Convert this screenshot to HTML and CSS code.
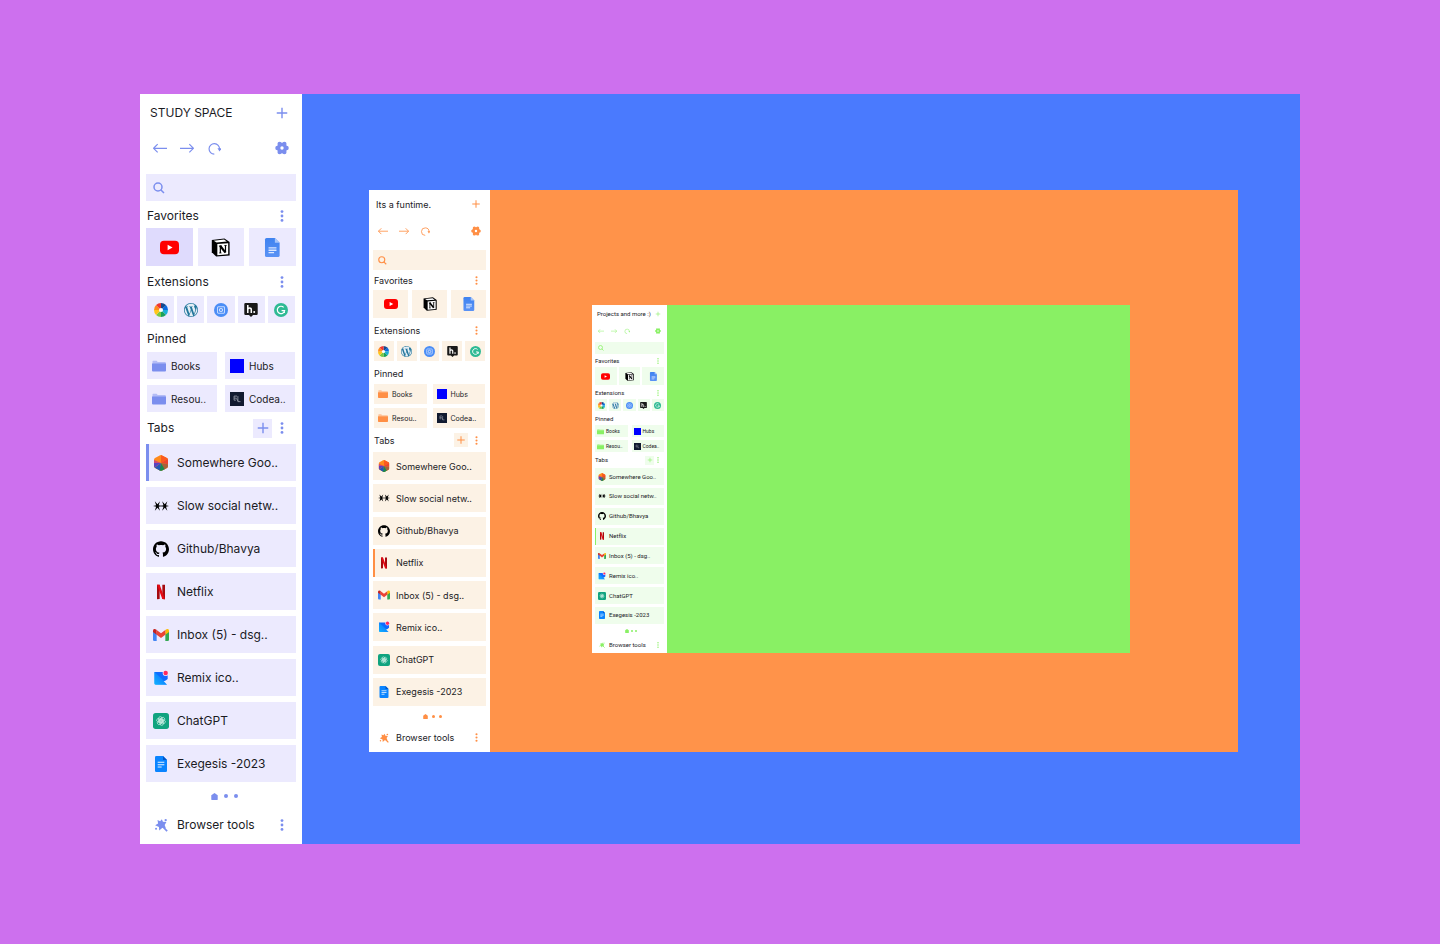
FILE: index.html
```html
<!DOCTYPE html>
<html lang="en">
<head>
<meta charset="utf-8">
<meta name="viewport" content="width=device-width, initial-scale=1">
<title>Spaces</title>
<link rel="stylesheet" href="styles.css">
</head>
<body>
<svg class="sprite" aria-hidden="true">
  <defs>
    <linearGradient id="g-doc" x1="0" y1="0" x2="0" y2="1"><stop offset="0" stop-color="#3f83f0"/><stop offset="1" stop-color="#5a92f5"/></linearGradient>
    <linearGradient id="g-remix" x1="0" y1="1" x2="1" y2="0"><stop offset="0" stop-color="#0fb4ff"/><stop offset=".55" stop-color="#0a6cff"/><stop offset="1" stop-color="#2a5cff"/></linearGradient>
    <clipPath id="c-hex"><path d="M12 0q1 0 2 .6l7 4q1.500 1 1.500 2.600v9.600q0 1.600-1.500 2.600L14 23.400q-2 1.200-4 0l-7-4Q1.500 18.400 1.500 16.800V7.200q0-1.600 1.500-2.600L10 .6Q11 0 12 0z"/></clipPath>
    <clipPath id="c-wheel"><circle cx="12" cy="12" r="12"/></clipPath>
  </defs>
  <symbol id="plus" viewBox="0 0 24 24"><path d="M12 3v18M3 12h18" fill="none" stroke="currentColor" stroke-width="2.400"/></symbol>
  <symbol id="back" viewBox="0 0 24 24"><path d="M24 12.500H1M8 5.500l-7 7 7 7" fill="none" stroke="currentColor" stroke-width="2"/></symbol>
  <symbol id="forward" viewBox="0 0 24 24"><path d="M0 12.500h23M16 5.500l7 7-7 7" fill="none" stroke="currentColor" stroke-width="2"/></symbol>
  <symbol id="reload" viewBox="0 0 24 24"><path d="M12.500 22.500A9 9 0 1 1 21.500 14" fill="none" stroke="currentColor" stroke-width="2"/><path d="M18 12.500h7L21.500 18z" fill="currentColor"/></symbol>
  <symbol id="gear" viewBox="0 0 24 24"><g fill="currentColor"><circle cx="12" cy="12" r="8.800"/><circle cx="8" cy="5" r="3.800"/><circle cx="16" cy="5" r="3.800"/><circle cx="19.800" cy="12" r="3.800"/><circle cx="16" cy="19" r="3.800"/><circle cx="8" cy="19" r="3.800"/><circle cx="4.200" cy="12" r="3.800"/></g><circle cx="12" cy="12" r="2.900" fill="#fff"/></symbol>
  <symbol id="search" viewBox="0 0 24 24"><g fill="none" stroke="currentColor" stroke-width="3"><circle cx="10" cy="10" r="8"/><path d="M15.500 15.500l6.500 6.500"/></g></symbol>
  <symbol id="more" viewBox="0 0 24 24"><g fill="currentColor"><circle cx="12" cy="3.200" r="2.800"/><circle cx="12" cy="12" r="2.800"/><circle cx="12" cy="20.800" r="2.800"/></g></symbol>
  <symbol id="home" viewBox="0 0 24 24"><path d="M12 0l11 8v13q0 3-3 3H4q-3 0-3-3V8z" fill="currentColor"/></symbol>
  <symbol id="folder" viewBox="0 0 28 24"><path d="M1 3q0-1.500 1.500-1.500H9l2.500 2.500H26q1.500 0 1.500 1.500V8H1z" fill="currentColor" opacity=".5"/><path d="M0 7h28v14q0 2-2 2H2q-2 0-2-2z" fill="currentColor"/></symbol>
  <symbol id="wand" viewBox="0 0 24 24"><g fill="currentColor"><path d="M13.500 2l1.800 4.500 6 .5-3 5 2.200 6-6-1.500-5.500 5-.5-6L2 12.500l5-3L6 3.500l4.500 2z"/><circle cx="20" cy="3.500" r="2"/><circle cx="3.500" cy="18.500" r="1.700"/></g><path d="M15 15l7.500 7.500" stroke="currentColor" stroke-width="3"/></symbol>

  <symbol id="youtube" viewBox="0 0 24 24"><rect x="0" y="3.500" width="24" height="17" rx="5" fill="#f00"/><path d="M9.600 8.400v7.200l6.300-3.600z" fill="#fff"/></symbol>
  <symbol id="notion" viewBox="0 0 24 24"><path d="M1 2.500L17 .5 23.500 5v17L6.500 23.500 1 18z" fill="#000"/><path d="M3.500 3.500L16.500 2l3.500 2.500L7 5.700z" fill="#fff"/><path d="M8 7.600l13.700-1v13.800L8 21.700z" fill="#fff"/><path d="M11.800 10v8.800M18.300 9.300v8.800" fill="none" stroke="#000" stroke-width="1.500"/><path d="M11.500 9.800l6.800 8.700" fill="none" stroke="#000" stroke-width="2.800"/><path d="M10 10h3.400M16.800 9.400h3M10.300 18.900h3" stroke="#000" stroke-width="1"/></symbol>
  <symbol id="docs" viewBox="0 0 24 24"><path d="M4.500 0H15l6 6v16q0 2-2 2H4.500q-2 0-2-2V2q0-2 2-2z" fill="url(#g-doc)"/><path d="M15 0l6 6h-6z" fill="#a6c5fa"/><path d="M7 12.500h10M7 15.500h10M7 18.500h7" stroke="#dce8ff" stroke-width="1.700"/></symbol>

  <symbol id="wheel" viewBox="0 0 24 24"><g clip-path="url(#c-wheel)"><path d="M12 12V0h12v1z" fill="#15478c"/><path d="M12 12L24 0v12z" fill="#0a6ae0"/><path d="M12 12h12v12z" fill="#18b0d8"/><path d="M12 12l12 12H12z" fill="#18a05c"/><path d="M12 12v12H0z" fill="#7ac943"/><path d="M12 12L0 24V12z" fill="#ffc61a"/><path d="M12 12H0V0z" fill="#ff8a1c"/><path d="M12 12L0 0h12z" fill="#f0352f"/></g><circle cx="12" cy="12" r="3.500" fill="#fff"/></symbol>
  <symbol id="wordpress" viewBox="0 0 24 24"><circle cx="12" cy="12" r="11.500" fill="#e4eef5"/><path fill="#21759b" d="M21.469 6.825c.84 1.537 1.318 3.300 1.318 5.175 0 3.979-2.156 7.456-5.363 9.325l3.295-9.527c.615-1.540.82-2.771.82-3.864 0-.405-.026-.78-.07-1.110m-7.981.105c.647-.03 1.232-.105 1.232-.105.582-.075.514-.93-.067-.899 0 0-1.755.135-2.880.135-1.064 0-2.850-.15-2.850-.15-.585-.03-.661.855-.075.885 0 0 .54.061 1.125.09l1.680 4.605-2.370 7.080L5.354 6.900c.649-.03 1.234-.1 1.234-.1.585-.075.516-.93-.065-.896 0 0-1.746.138-2.874.138-.2 0-.438-.008-.69-.015C4.911 3.150 8.235 1.215 12 1.215c2.809 0 5.365 1.072 7.286 2.833-.046-.003-.091-.009-.141-.009-1.060 0-1.812.923-1.812 1.914 0 .89.513 1.643 1.060 2.531.411.72.89 1.643.89 2.977 0 .915-.354 1.994-.821 3.479l-1.075 3.585-3.900-11.610zM12 22.784c-1.059 0-2.081-.153-3.048-.437l3.237-9.406 3.315 9.087c.024.053.05.101.078.149-1.120.393-2.325.609-3.582.609M1.211 12c0-1.564.336-3.050.935-4.390L7.290 21.709C3.694 19.960 1.212 16.271 1.211 12M12 0C5.385 0 0 5.385 0 12s5.385 12 12 12 12-5.385 12-12S18.615 0 12 0"/></symbol>
  <symbol id="camera" viewBox="0 0 24 24"><circle cx="12" cy="12" r="12" fill="#4a8df6"/><rect x="6" y="6.500" width="12" height="11" rx="1.500" fill="none" stroke="#c3d9ff" stroke-width="1.800"/><circle cx="12" cy="12" r="2.700" fill="none" stroke="#d7e6ff" stroke-width="1.800"/></symbol>
  <symbol id="hypothesis" viewBox="0 0 24 24"><path d="M2.500 0h19q2 0 2 2v16.500q0 2-2 2h-6L12 24l-3.500-3.500h-6q-2 0-2-2V2q0-2 2-2z" fill="#191919"/><path d="M6.500 3.500V17M6.500 11.500q0-3 3-3t3 3V17" fill="none" stroke="#fff" stroke-width="2.600"/><circle cx="17.500" cy="15.500" r="1.700" fill="#fff"/></symbol>
  <symbol id="grammarly" viewBox="0 0 24 24"><circle cx="12" cy="12" r="12" fill="#2fba94"/><path d="M16.500 7.500a6.300 6.300 0 1 0 1.700 5.500H13M17.800 13v4" fill="none" stroke="#fff" stroke-width="2"/></symbol>

  <symbol id="bluebox" viewBox="0 0 24 24"><path d="M0 0h24v24H0z" fill="#00f"/></symbol>
  <symbol id="codea" viewBox="0 0 24 24"><path d="M0 0h24v24H0z" fill="#111a30"/><path d="M7 7h5M7 7v7M7 10.500h4M7 14h3M13.500 7v9.500H18M11 11l3 5" fill="none" stroke="#9a9fac" stroke-width="1.400"/></symbol>

  <symbol id="hex" viewBox="0 0 24 24"><g clip-path="url(#c-hex)"><path d="M0 0h24v24H0z" fill="#ff8a1c"/><path d="M12 0l12 5-12 7z" fill="#fb5a20"/><path d="M24 5v9l-12-2z" fill="#ea4530"/><path d="M12 12l12 2v5l-7 4z" fill="#a8623a"/><path d="M12 12l7 12H9z" fill="#188a50"/><path d="M12 12l-2 12-8-5z" fill="#2456b8"/><path d="M12 12L0 20v-9z" fill="#5a40c0"/><path d="M12 12L0 12V7z" fill="#d04a70"/></g></symbol>
  <symbol id="stars" viewBox="0 0 24 24"><g fill="#000"><path id="star" d="M-.5 12l5.200-1.200L2.700 5l4 4.200L10.500 5l-2 5.800L14 12l-5.500 1.200 2 5.800-3.800-4.200-4 4.200 2-5.800z"/><path d="M10.500 12l5.200-1.200-2-5.800 4 4.200L21.500 5l-2 5.800L24.500 12l-5 1.200 2 5.800-3.800-4.200-4 4.200 2-5.800z"/></g></symbol>
  <symbol id="github" viewBox="0 0 24 24"><path d="M12 .297c-6.630 0-12 5.373-12 12 0 5.303 3.438 9.800 8.205 11.385.6.113.82-.258.82-.577 0-.285-.01-1.040-.015-2.040-3.338.724-4.042-1.610-4.042-1.610C4.422 18.070 3.633 17.700 3.633 17.700c-1.087-.744.084-.729.084-.729 1.205.084 1.838 1.236 1.838 1.236 1.070 1.835 2.809 1.305 3.495.998.108-.776.417-1.305.76-1.605-2.665-.3-5.466-1.332-5.466-5.930 0-1.310.465-2.380 1.235-3.220-.135-.303-.54-1.523.105-3.176 0 0 1.005-.322 3.300 1.230.96-.267 1.980-.399 3-.405 1.020.006 2.040.138 3 .405 2.280-1.552 3.285-1.230 3.285-1.230.645 1.653.24 2.873.12 3.176.765.84 1.230 1.910 1.230 3.220 0 4.610-2.805 5.625-5.475 5.920.42.36.81 1.096.81 2.220 0 1.606-.015 2.896-.015 3.286 0 .315.21.69.825.57C20.565 22.092 24 17.592 24 12.297c0-6.627-5.373-12-12-12"/></symbol>
  <symbol id="netflix" viewBox="0 0 24 24"><path d="M6 1h4v21.500L6 23zM14 1h4v22l-4-.5z" fill="#a5090f"/><path d="M6 1h4l8 22-4-.5z" fill="#e50914"/></symbol>
  <symbol id="gmail" viewBox="0 0 24 24"><path d="M0 6v13q0 2 2 2h3.500V9.800z" fill="#4285f4"/><path d="M24 6v13q0 2-2 2h-3.500V9.800z" fill="#34a853"/><path d="M0 5.500q0-2 2-2.500 1.400-.2 2.500.6L5.500 4.400v7.200L0 7.500z" fill="#c5221f"/><path d="M24 5.500q0-2-2-2.500-1.400-.2-2.500.6l-1 .8v7.200L24 7.500z" fill="#fbbc04"/><path d="M5.500 4.400L12 9.300l6.500-4.900v7.200L12 16.500l-6.500-4.900z" fill="#ea4335"/></symbol>
  <symbol id="remix" viewBox="0 0 24 24"><path d="M2 3h17q3 0 3 3v7.500q-3 3-6 3.500l5 5H4q-2 0-2-2z" fill="url(#g-remix)"/><path d="M2 3l13 12 6 7H4q-2 0-2-2z" fill="#17b0ff" opacity=".4"/><circle cx="19" cy="4.500" r="4.500" fill="#eceafe"/><circle cx="19" cy="4.500" r="3.300" fill="#ff2b5e"/></symbol>
  <symbol id="chatgpt" viewBox="0 0 24 24"><rect width="24" height="24" rx="4" fill="#10a37f"/><g fill="none" stroke="#c9ede3" stroke-width="1.100"><rect x="8.500" y="5.500" width="5" height="9" rx="2.500"/><rect x="8.500" y="5.500" width="5" height="9" rx="2.500" transform="rotate(60 12 12)"/><rect x="8.500" y="5.500" width="5" height="9" rx="2.500" transform="rotate(120 12 12)"/><rect x="8.500" y="5.500" width="5" height="9" rx="2.500" transform="rotate(180 12 12)"/><rect x="8.500" y="5.500" width="5" height="9" rx="2.500" transform="rotate(240 12 12)"/><rect x="8.500" y="5.500" width="5" height="9" rx="2.500" transform="rotate(300 12 12)"/></g></symbol>
  <symbol id="file" viewBox="0 0 24 24"><path d="M5 0h10l6 6v16q0 2-2 2H5q-2 0-2-2V2q0-2 2-2z" fill="#0a84ff"/><path d="M15 0l6 6h-6z" fill="#0057c8"/><path d="M7 9.500h10M7 13h10M7 16.500h6" stroke="#e6f2ff" stroke-width="1.600"/></symbol>
</svg>

<main class="desk"></main>
<script src="app.js"></script>
</body>
</html>
```

FILE: styles.css
```css
* { box-sizing: border-box; }

body {
  margin: 0;
  background: #cd70ee;
  color: #1b1b1f;
  font-family: Inter, "Liberation Sans", sans-serif;
}

button, input {
  margin: 0;
  padding: 0;
  border: 0;
  border-radius: 0;
  background: none;
  color: inherit;
  font: inherit;
}

.sprite { position: absolute; width: 0; height: 0; }

.desk {
  display: flex;
  min-height: 100vh;
  padding: 94px 140px 100px;
}

.browser { display: flex; flex: 1; min-width: 0; }
.viewport { display: flex; flex: 1; min-width: 0; background: var(--page); }

.large {
  --page: #4a7afe; --accent: #7b8eee; --tile: #eceafe; --picked: #dfdbfd;
  --side: 162px; --pad: 6px; --inset: 1px; --title-inset: 4px; --drop: 2px;
  --text: 12px; --small: 10px;
  --title-h: 38px; --nav-h: 32px; --nav-gap: 10px; --bar-h: 27px;
  --fav-head: 27px; --fav-h: 38px; --fav-gap: 5px;
  --ext-head: 30px; --ext-gap: 3px;
  --pin-head: 29px; --pin-gap: 6px; --pin-col: 8px;
  --tabs-head: 32px; --tab-h: 37px; --pager-h: 28px; --tools-h: 34px;
  --i-nav: 14px; --i-search: 12px; --i-more: 12px; --i-fav: 19px; --i-ext: 14px; --i-pin: 14px; --i-tab: 16px; --i-dot: 4px; --i-home: 7px;
  --lead: 7px; --nav-space: 13px; --tab-space: 8px; --pin-lead: 5px; --pin-space: 5px; --pager-gap: 6px; --add-gap: 3px; --end: 7px; --add: 19px; --mark: 3px;
}
.large > .viewport { padding: 96px 62px 92px 67px; }

.medium {
  --page: #ff934a; --accent: #ff8f45; --tile: #fcf2e5; --picked: #fcf2e5;
  --side: 121px; --pad: 4px; --inset: 1px; --title-inset: 3px; --drop: 1px;
  --text: 9px; --small: 7px;
  --title-h: 28px; --nav-h: 26px; --nav-gap: 6px; --bar-h: 20px;
  --fav-head: 20px; --fav-h: 28px; --fav-gap: 4px;
  --ext-head: 23px; --ext-gap: 3px;
  --pin-head: 23px; --pin-gap: 4px; --pin-col: 6px;
  --tabs-head: 24px; --tab-h: 28px; --pager-h: 20px; --tools-h: 26px;
  --i-nav: 10px; --i-search: 9px; --i-more: 9px; --i-fav: 14px; --i-ext: 11px; --i-pin: 10px; --i-tab: 12px; --i-dot: 3px; --i-home: 5px;
  --lead: 5px; --nav-space: 11px; --tab-space: 6px; --pin-lead: 4px; --pin-space: 4px; --pager-gap: 4px; --add-gap: 3px; --end: 5px; --add: 14px; --mark: 2px;
}
.medium > .viewport { padding: 115px 108px 99px 102px; }

.small {
  --page: #89f064; --accent: #89f064; --tile: #effdec; --picked: #effdec;
  --side: 75px; --pad: 3px; --inset: 0px; --title-inset: 2px; --drop: 1px;
  --text: 6px; --small: 5px;
  --title-h: 18px; --nav-h: 15px; --nav-gap: 4px; --bar-h: 12px;
  --fav-head: 13px; --fav-h: 18px; --fav-gap: 2px;
  --ext-head: 14px; --ext-gap: 2px;
  --pin-head: 14px; --pin-gap: 3px; --pin-col: 4px;
  --tabs-head: 16px; --tab-h: 17px; --pager-h: 14px; --tools-h: 15px;
  --i-nav: 6px; --i-search: 6px; --i-more: 6px; --i-fav: 9px; --i-ext: 7px; --i-pin: 7px; --i-tab: 8px; --i-dot: 2px; --i-home: 4px;
  --lead: 3px; --nav-space: 7px; --tab-space: 3px; --pin-lead: 2px; --pin-space: 2px; --pager-gap: 2px; --add-gap: 1px; --end: 3px; --add: 9px; --mark: 1px;
  font-family: Roboto, "Liberation Sans", sans-serif;
}

.sidebar {
  display: flex;
  flex-direction: column;
  flex: none;
  width: var(--side);
  padding: 0 var(--pad);
  background: #fff;
  font-size: var(--text);
  line-height: 1;
  white-space: nowrap;
}

.icon { display: block; flex: none; width: var(--i-nav); height: var(--i-nav); overflow: visible; }
.icon-button { display: flex; align-items: center; justify-content: center; width: var(--i-nav); color: var(--accent); }
.icon-button.more .icon { width: var(--i-more); height: var(--i-more); }

.row { display: flex; align-items: center; padding: 0 var(--end) 0 var(--inset); }
.row h1, .row h2 { margin: 0 auto 0 0; font-size: var(--text); font-weight: 400; }

.title { height: var(--title-h); padding-left: var(--title-inset); }
.nav { gap: var(--nav-space); height: var(--nav-h); margin-bottom: var(--nav-gap); padding-left: var(--lead); }
.nav .settings { margin-left: auto; }

.search { display: flex; align-items: center; gap: var(--tab-space); height: var(--bar-h); padding-left: var(--lead); background: var(--tile); color: var(--accent); }
.search .icon { width: var(--i-search); height: var(--i-search); }
.search input { flex: 1; min-width: 0; height: 100%; outline: none; color: #1b1b1f; }

.fav-head { height: var(--fav-head); padding-top: var(--drop); }
.ext-head { height: var(--ext-head); padding-top: var(--drop); }
.pin-head { height: var(--pin-head); padding-top: var(--drop); }
.tabs-head { gap: var(--add-gap); height: var(--tabs-head); }
.tabs-head .add { width: var(--add); height: var(--add); background: var(--tile); }

.tile { display: flex; align-items: center; justify-content: center; min-width: 0; background: var(--tile); }
.favorites { display: grid; grid-template-columns: repeat(3, 1fr); grid-auto-rows: var(--fav-h); gap: var(--fav-gap); }
.favorites .icon { width: var(--i-fav); height: var(--i-fav); }
.favorites .tile:first-child { background: var(--picked); }

.extensions { display: grid; grid-template-columns: repeat(5, 1fr); grid-auto-rows: var(--bar-h); gap: var(--ext-gap); padding: 0 var(--inset); }
.extensions .icon { width: var(--i-ext); height: var(--i-ext); }

.pinned { display: grid; grid-template-columns: 1fr 1fr; grid-auto-rows: var(--bar-h); gap: var(--pin-gap) var(--pin-col); padding: 0 var(--inset); font-size: var(--small); }
.pinned .tile { justify-content: flex-start; gap: var(--pin-space); padding-left: var(--pin-lead); color: var(--accent); }
.pinned .tile span { color: #1b1b1f; }
.pinned .icon { width: var(--i-pin); height: var(--i-pin); }

.tabs { display: flex; flex: 1; flex-direction: column; justify-content: space-between; margin: 0; padding: 0; list-style: none; }
.tab { display: flex; align-items: center; gap: var(--tab-space); width: 100%; height: var(--tab-h); padding-left: var(--lead); background: var(--tile); }
.tab.current { box-shadow: inset var(--mark) 0 var(--accent); }
.tab .icon, .tools > .icon { width: var(--i-tab); height: var(--i-tab); }

.pager { display: flex; align-items: center; justify-content: center; gap: var(--pager-gap); height: var(--pager-h); padding-left: var(--lead); color: var(--accent); }
.pager .icon { width: var(--i-home); height: var(--i-home); }
.pager i { width: var(--i-dot); height: var(--i-dot); border-radius: 50%; background: currentColor; }

.tools { display: flex; align-items: center; gap: var(--tab-space); height: var(--tools-h); padding: 0 var(--end) var(--title-inset) var(--lead); color: var(--accent); }
.tools span { margin-right: auto; color: #1b1b1f; }
.tools > .icon { padding: 1px; }
```

FILE: app.js
```js
const favorites = [["youtube", "YouTube"], ["notion", "Notion"], ["docs", "Docs"]];
const extensions = [["wheel", "Color picker"], ["wordpress", "WordPress"], ["camera", "Screenshot"], ["hypothesis", "Hypothesis"], ["grammarly", "Grammarly"]];
const pinned = [["folder", "Books"], ["bluebox", "Hubs"], ["folder", "Resou.."], ["codea", "Codea.."]];
const tabs = [
  ["hex", "Somewhere Goo.."], ["stars", "Slow social netw.."], ["github", "Github/Bhavya"], ["netflix", "Netflix"],
  ["gmail", "Inbox (5) - dsg.."], ["remix", "Remix ico.."], ["chatgpt", "ChatGPT"], ["file", "Exegesis -2023"],
];
const spaces = [
  { size: "large", title: "STUDY SPACE", current: 0 },
  { size: "medium", title: "Its a funtime.", current: 3 },
  { size: "small", title: "Projects and more :)", current: 3 },
];

const icon = (id) => `<svg class="icon" aria-hidden="true"><use href="#${id}"/></svg>`;
const iconButton = (id, label, extra = "") => `<button class="icon-button ${extra}" type="button" aria-label="${label}">${icon(id)}</button>`;
const more = (label) => iconButton("more", label, "more");
const tile = ([id, label]) => `<button class="tile" type="button" aria-label="${label}">${icon(id)}</button>`;

// Each space shows the next one inside its viewport.
function browser(index) {
  const space = spaces[index];
  if (!space) return "";
  return `
  <section class="browser ${space.size}">
    <aside class="sidebar">
      <header class="row title"><h1>${space.title}</h1>${iconButton("plus", "New space")}</header>
      <nav class="row nav">${iconButton("back", "Back")}${iconButton("forward", "Forward")}${iconButton("reload", "Reload")}${iconButton("gear", "Settings", "settings")}</nav>
      <label class="search">${icon("search")}<input type="text" aria-label="Search"></label>
      <div class="row fav-head"><h2>Favorites</h2>${more("Favorites menu")}</div>
      <div class="favorites">${favorites.map(tile).join("")}</div>
      <div class="row ext-head"><h2>Extensions</h2>${more("Extensions menu")}</div>
      <div class="extensions">${extensions.map(tile).join("")}</div>
      <div class="row pin-head"><h2>Pinned</h2></div>
      <div class="pinned">${pinned.map(([id, label]) => `<button class="tile" type="button">${icon(id)}<span>${label}</span></button>`).join("")}</div>
      <div class="row tabs-head"><h2>Tabs</h2>${iconButton("plus", "New tab", "add")}${more("Tabs menu")}</div>
      <ul class="tabs">${tabs.map(([id, label], i) => `<li><button class="tab${i === space.current ? " current" : ""}" type="button">${icon(id)}<span>${label}</span></button></li>`).join("")}</ul>
      <div class="pager">${icon("home")}<i></i><i></i></div>
      <footer class="tools">${icon("wand")}<span>Browser tools</span>${more("Tools menu")}</footer>
    </aside>
    <div class="viewport">${browser(index + 1)}</div>
  </section>`;
}

document.querySelector(".desk").innerHTML = browser(0);
```
